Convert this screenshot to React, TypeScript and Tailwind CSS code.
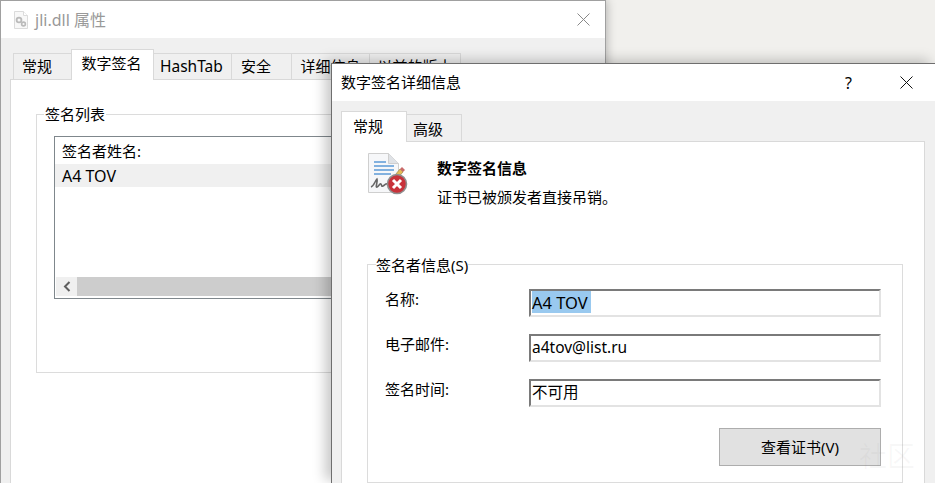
const font = "[font-family:'Noto_Sans','Noto_Sans_CJK_SC',sans-serif]";

function FileGearIcon() {
  return (
    <svg width="16" height="18" viewBox="0 0 16 18" className="opacity-60">
      <path d="M1.5 .5h9l4 4v13h-13z" fill="#f4f4f4" stroke="#c4c4c4" />
      <path d="M10.5 .5v4h4" fill="#fff" stroke="#c4c4c4" />
      <circle cx="6" cy="9" r="2.400" fill="none" stroke="#8d8d8d" strokeWidth="1.8" />
      <circle cx="10.500" cy="13" r="1.900" fill="none" stroke="#8d8d8d" strokeWidth="1.6" />
    </svg>
  );
}

function SignatureIcon() {
  return (
    <svg width="40" height="42" viewBox="0 0 40 42">
      <path d="M.5 .5h20l10 10v29H.5z" fill="#f6f7f9" stroke="#cfcfcf" />
      <path d="M20.5 .5v10h10" fill="#dfe2e6" stroke="#cfcfcf" />
      <path d="M6 9h12M6 13h20M6 17h20M6 21h17" stroke="#5c9bd6" strokeWidth="1.300" />
      <path d="M3 34c3-1 4-6 6-8 1 2-2 9 0 8s3-4 4-3 0 3 2 2 3-3 4-2 0 2 3 1" fill="none" stroke="#666" strokeWidth="1.600" />
      <path d="M23 27l9-11 3 3-9 10-4 1z" fill="#e5bb55" stroke="#9c8344" strokeWidth=".7" />
      <path d="M32 16l2-2 3 3-2 2z" fill="#c96a6a" />
      <circle cx="29" cy="31" r="9.500" fill="#c8323a" stroke="#8f8f8f" strokeWidth="1.600" />
      <path d="M25 27l8 8M33 27l-8 8" stroke="#fff" strokeWidth="3" />
    </svg>
  );
}

function CloseIcon({ color }: { color: string }) {
  return (
    <svg width="13" height="13" viewBox="0 0 13 13">
      <path d="M.5 .5l12 12M12.500 .5l-12 12" stroke={color} />
    </svg>
  );
}

function Field({ label, value, selected }: { label: string; value: string; selected?: boolean }) {
  return (
    <div className="flex h-[28px] items-start">
      <div className="w-[161px] pl-[17px] text-[15px] leading-[20px]">{label}</div>
      <div className="h-[28px] w-[352px] border-2 border-t-[#7a7a7a] border-l-[#7a7a7a] border-r-[#e3e3e3] border-b-[#e3e3e3] bg-white pl-[1px] text-[15.5px] leading-[22px]">
        {selected ? (
          <span className="inline-block h-[22px] w-[59px] bg-[#99c9ef] text-[16.5px] leading-[24px]">{value}</span>
        ) : (
          <span className="inline-block h-[22px]">{value}</span>
        )}
      </div>
    </div>
  );
}

export default function App() {
  return (
    <div className={`relative h-[483px] w-[935px] overflow-hidden bg-[#f1f0ed] text-black ${font}`}>
      {/* 后面的属性窗口 */}
      <div className="absolute left-0 top-0 flex h-[483px] w-[606px] flex-col border-x border-t border-[#a0a0a0] bg-[#f0f0f0] shadow-[0_0_10px_rgba(0,0,0,0.3)]">
        <div className="flex h-[37px] shrink-0 items-center justify-between bg-white pl-[12px] pr-[15px]">
          <div className="flex items-center gap-[6px] text-[16px] text-[#999]">
            <FileGearIcon />
            <span>jli.dll 属性</span>
          </div>
          <CloseIcon color="#888" />
        </div>
        <div className="flex h-[41px] shrink-0 items-end pl-[12px] text-[15px]">
          <div className="-mr-px flex h-[26px] w-[59px] items-center border border-b-0 border-[#d9d9d9] pl-[8px]">常规</div>
          <div className="z-10 -mr-px mb-[-1px] flex h-[31px] w-[83px] items-start justify-center border border-b-0 border-[#d9d9d9] bg-white pr-[2px] pt-[2px]">数字签名</div>
          <div className="-mr-px flex h-[26px] w-[79px] items-center border border-b-0 border-[#d9d9d9] pl-[6px] text-[15.500px]">HashTab</div>
          <div className="-mr-px flex h-[26px] w-[61px] items-center border border-b-0 border-[#d9d9d9] pl-[9px]">安全</div>
          <div className="-mr-px flex h-[26px] w-[79px] items-center justify-center border border-b-0 border-[#d9d9d9]">详细信息</div>
          <div className="flex h-[26px] w-[92px] items-center justify-center border border-b-0 border-[#d9d9d9]">以前的版本</div>
        </div>
        <div className="ml-[9px] mr-[9px] flex-1 border border-b-0 border-[#d9d9d9] bg-white pl-[25px] pr-[20px] pt-[34px]">
          <div className="relative h-[259px] border border-[#dcdcdc] pl-[17px] pr-[16px] pt-[21px]">
            <span className="absolute left-[7px] top-[-11px] bg-white px-[1px] text-[15px] leading-[20px]">签名列表</span>
            <div className="flex h-[163px] flex-col border border-[#7f878c]">
              <div className="px-[7px] pt-[4px] text-[15px] leading-[20px]">签名者姓名:</div>
              <div className="mt-[3px] h-[23px] bg-[#f0f0f0] px-[7px] text-[16px] leading-[25px]">A4 TOV</div>
              <div className="flex-1" />
              <div className="mx-[1px] mb-[2px] flex h-[19px]">
                <div className="flex w-[21px] items-center justify-center bg-[#f0f0f0]">
                  <svg width="8" height="11" viewBox="0 0 8 11">
                    <path d="M6.500 1L2 5.500l4.500 4.500" fill="none" stroke="#606060" strokeWidth="2" />
                  </svg>
                </div>
                <div className="flex-1 bg-[#cdcdcd]" />
              </div>
            </div>
          </div>
        </div>
      </div>

      {/* 前面的详细信息窗口 */}
      <div className="absolute left-[331px] top-[63px] flex h-[420px] w-[604px] flex-col border-l border-t border-[#6e6e6e] bg-[#f0f0f0] shadow-[-6px_-3px_12px_rgba(0,0,0,0.22)]">
        <div className="flex h-[37px] shrink-0 items-center bg-white pl-[9px] pr-[22px] text-[15px]">
          <span className="flex-1">数字签名详细信息</span>
          <span className="mr-[48px] text-[16px]">?</span>
          <CloseIcon color="#111" />
        </div>
        <div className="flex h-[40px] shrink-0 items-end pl-[9px] text-[15px]">
          <div className="z-10 mb-[-1px] flex h-[31px] w-[66px] items-start border border-b-0 border-[#d9d9d9] bg-white pl-[11px] pt-[3px]">常规</div>
          <div className="flex h-[27px] w-[55px] items-center border border-b-0 border-l-0 border-[#d9d9d9] pl-[6px] pt-[2px]">高级</div>
        </div>
        <div className="ml-[9px] mr-[10px] flex-1 border border-b-0 border-[#d9d9d9] bg-white pl-[25px] pr-[21px] pt-[11px]">
          <div className="flex h-[111px] items-start">
            <div className="ml-[1px]">
              <SignatureIcon />
            </div>
            <div className="ml-[29px]">
              <div className="mt-[4px] text-[15px] font-bold leading-[22px]">数字签名信息</div>
              <div className="mt-[7px] text-[15px] leading-[22px]">证书已被颁发者直接吊销。</div>
            </div>
          </div>
          <div className="relative flex h-[219px] flex-col gap-[17px] border border-[#dcdcdc] pr-[21px] pt-[24px]">
            <span className="absolute left-[8px] top-[-10px] bg-white text-[15px] leading-[20px]">签名者信息(S)</span>
            <Field label="名称:" value="A4 TOV" selected />
            <Field label="电子邮件:" value="a4tov@list.ru" />
            <Field label="签名时间:" value="不可用" />
            <div className="mt-[4px] flex justify-end">
              <div className="flex h-[38px] w-[162px] items-center justify-center border border-[#adadad] bg-[#e1e1e1] text-[15px]">查看证书(V)</div>
            </div>
          </div>
        </div>
      </div>

      {/* 水印 */}
      <span className="absolute bottom-[12px] right-[20px] text-[28px] leading-[30px] text-[#8888880f]">社区</span>
    </div>
  );
}
